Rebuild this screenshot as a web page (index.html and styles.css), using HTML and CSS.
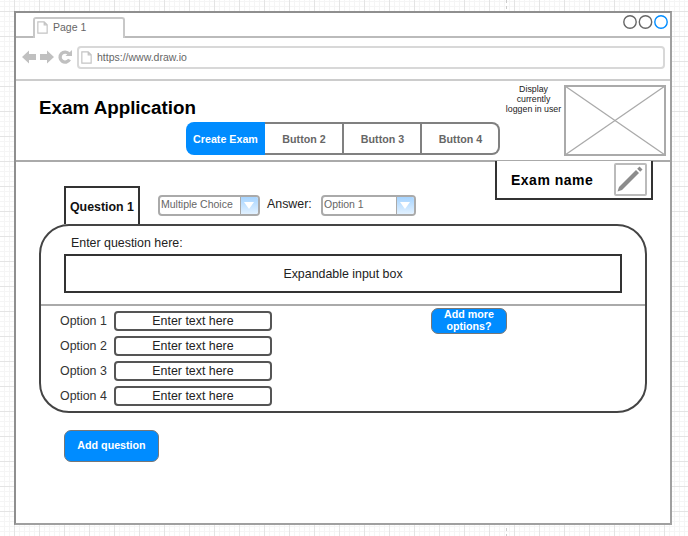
FILE: index.html
```html
<!DOCTYPE html>
<html lang="en">

<head>
  <meta charset="UTF-8" />
  <title>Exam Application</title>
  <link rel="stylesheet" href="styles.css">
</head>

<body>
  <div class="window">
    <div class="tabbar">
      <div class="tab">
        <svg class="doc-icon" width="11" height="13" viewBox="0 0 13 15">
          <path d="M1 .8H8.5L12 4.3V14.2H1Z M8.5 .8V4.3H12" fill="#fff" stroke="#c4c4c4" stroke-width="1.4" />
        </svg>
        <span>Page 1</span>
      </div>
      <svg class="circles" width="46" height="16" viewBox="0 0 46 16">
        <circle cx="7" cy="8" r="6.200" fill="none" stroke="#666" stroke-width="1.400" />
        <circle cx="22.500" cy="8" r="6.200" fill="none" stroke="#666" stroke-width="1.400" />
        <circle cx="38" cy="8" r="6.200" fill="none" stroke="#008cff" stroke-width="1.400" />
      </svg>
    </div>

    <div class="addressbar">
      <svg class="nav-icons" width="50" height="16" viewBox="0 0 50 16">
        <path d="M0 8 7 1.500V5H14V11H7V14.500Z" fill="#c0c0c0" />
        <path d="M32 8 25 1.500V5H18V11H25V14.500Z" fill="#c0c0c0" />
        <path d="M47.500 10.500A5 5 0 1 1 47 5" fill="none" stroke="#c0c0c0" stroke-width="3.400" />
        <path d="M43.500 7H50V1Z" fill="#c0c0c0" />
      </svg>
      <div class="urlbox">
        <svg class="doc-icon" width="11" height="13" viewBox="0 0 13 15">
          <path d="M1 .8H8.5L12 4.3V14.2H1Z M8.5 .8V4.3H12" fill="#fff" stroke="#c4c4c4" stroke-width="1.4" />
        </svg>
        <span>https://www.draw.io</span>
      </div>
    </div>

    <div class="header">
      <div class="header-left">
        <h1>Exam Application</h1>
        <div class="btn-group">
          <div class="seg active">Create Exam</div>
          <div class="seg">Button 2</div>
          <div class="seg">Button 3</div>
          <div class="seg">Button 4</div>
        </div>
      </div>
      <div class="user-note">Display<br>currently<br>loggen in user</div>
      <svg class="avatar" width="102" height="71" viewBox="0 0 102 71">
        <rect x="1" y="1" width="100" height="69" fill="#fff" stroke="#aaa" stroke-width="2" />
        <path d="M1 1 101 70M101 1 1 70" stroke="#aaa" stroke-width="1.300" />
      </svg>
    </div>

    <div class="content">
      <div class="exam-row">
        <div class="exam-name">
          <span>Exam name</span>
          <div class="edit-btn">
            <svg width="29" height="29" viewBox="0 0 29 29">
              <path d="M1.500 26.500 3 22 20 5 23 8 6 25Z" fill="#8c8c8c" />
              <path d="M21.200 3.800 23.500 1.500 26.500 4.500 24.200 6.800Z" fill="#8c8c8c" />
            </svg>
          </div>
        </div>
      </div>

      <div class="toolbar">
        <div class="question-tab">Question 1</div>
        <div class="select select-type">
          <span>Multiple Choice</span>
          <i class="arrow"></i>
        </div>
        <label class="answer-label">Answer:</label>
        <div class="select select-answer">
          <span>Option 1</span>
          <i class="arrow"></i>
        </div>
      </div>

      <div class="panel">
        <div class="prompt">Enter question here:</div>
        <div class="question-input">Expandable input box</div>
        <div class="options">
          <div class="option-list">
            <div class="option"><label>Option 1</label><div class="option-input">Enter text here</div></div>
            <div class="option"><label>Option 2</label><div class="option-input">Enter text here</div></div>
            <div class="option"><label>Option 3</label><div class="option-input">Enter text here</div></div>
            <div class="option"><label>Option 4</label><div class="option-input">Enter text here</div></div>
          </div>
          <div class="btn btn-more">Add more options?</div>
        </div>
      </div>

      <div class="btn btn-add">Add question</div>
    </div>
  </div>
</body>

</html>
```

FILE: styles.css
```css
* {
  box-sizing: border-box;
}

html,
body {
  height: 100%;
}

body {
  margin: 0;
  padding: 11px 0 0 14px;
  overflow: hidden;
  font-family: "Liberation Sans", Arial, sans-serif;
  color: #222;
  background-color: #fff;
  background-image:
    repeating-linear-gradient(to bottom, #ccc 0, #ccc 3px, transparent 3px, transparent 6px),
    linear-gradient(to right, #e4e4e4 1px, transparent 1px),
    linear-gradient(to bottom, #e4e4e4 1px, transparent 1px),
    linear-gradient(to right, #f5f5f5 1px, transparent 1px),
    linear-gradient(to bottom, #f5f5f5 1px, transparent 1px);
  background-size: 1px 100%, 25px 25px, 25px 25px, 5px 5px, 5px 5px;
  background-position: 506px 0, 14px 11px, 14px 11px, 14px 11px, 14px 11px;
  background-repeat: no-repeat, repeat, repeat, repeat, repeat;
}

.window {
  width: 658px;
  height: 514px;
  background: #fff;
  border: 2px solid #8f8f8f;
  border-right-color: #a0a0a0;
  border-bottom-color: #a0a0a0;
}

/* browser chrome */
.tabbar {
  display: flex;
  justify-content: space-between;
  height: 25px;
  padding: 4px 1px 0 17px;
  border-bottom: 2px solid #bbb;
}

.tab {
  display: flex;
  align-items: center;
  gap: 5px;
  width: 92px;
  height: 21px;
  padding: 0 0 3px 2px;
  margin-bottom: -2px;
  font-size: 10.500px;
  color: #666;
  background: #fff;
  border: 2px solid #c8c8c8;
  border-bottom: 0;
  border-radius: 3px 3px 0 0;
}

.circles {
  display: block;
  margin-top: -3px;
}

.addressbar {
  display: flex;
  align-items: center;
  gap: 5px;
  height: 43px;
  padding: 0 5px 3px 6px;
  border-bottom: 2px solid #ccc;
}

.urlbox {
  flex: 1;
  display: flex;
  align-items: center;
  gap: 5px;
  height: 23px;
  padding-left: 2px;
  font-size: 10.500px;
  color: #666;
  border: 2px solid #d8d8d8;
  border-radius: 4px;
}

/* app header */
.header {
  display: flex;
  height: 81px;
  padding-top: 4px;
  border-bottom: 2px solid #aaa;
}

.header-left {
  width: 485px;
}

h1 {
  margin: 0;
  padding: 11px 0 0 23px;
  height: 37px;
  font-size: 18.800px;
  line-height: 24px;
  font-weight: bold;
  color: #000;
}

.btn-group {
  display: flex;
  width: 314px;
  height: 33px;
  margin-left: 170px;
}

.seg {
  flex: 0 0 78px;
  display: flex;
  align-items: center;
  justify-content: center;
  padding-left: 1px;
  font-size: 10.700px;
  font-weight: bold;
  color: #666;
  border: 2px solid #808080;
  border-left: 0;
}

.seg.active {
  flex: 0 0 79px;
  padding-left: 0;
  color: #fff;
  background: #008cff;
  border: 0;
  border-radius: 8px 0 0 8px;
}

.seg.active + .seg {
  flex-basis: 79px;
}

.seg:last-child {
  border-radius: 0 8px 8px 0;
}

.user-note {
  width: 63px;
  margin-top: -1px;
  padding-left: 2px;
  font-size: 8.800px;
  line-height: 10px;
  text-align: center;
}

.avatar {
  display: block;
  flex: none;
}

/* question area */
.content {
  margin-top: -1px;
  padding-left: 23px;
}

.exam-row {
  display: flex;
  justify-content: flex-end;
  padding-right: 17px;
  margin-bottom: -14px;
}

.exam-name {
  display: flex;
  align-items: center;
  justify-content: space-between;
  width: 158px;
  height: 39px;
  padding: 0 4px 0 14px;
  font-size: 14px;
  font-weight: bold;
  letter-spacing: .5px;
  color: #000;
  background: #fff;
  border: 2px solid #333;
  border-top: 0;
}

.edit-btn {
  display: flex;
  width: 33px;
  height: 33px;
  border: 2px solid #bbb;
  border-radius: 2px;
}

.toolbar {
  display: flex;
  align-items: flex-start;
  height: 38px;
  padding-left: 25px;
}

.question-tab {
  flex: none;
  width: 76px;
  height: 38px;
  padding-top: 12px;
  text-align: center;
  font-size: 12.400px;
  font-weight: bold;
  color: #111;
  border: 2px solid #333;
  border-bottom: 0;
}

.select {
  display: flex;
  justify-content: space-between;
  height: 21px;
  margin-top: 9px;
  padding-left: 1px;
  font-size: 10.500px;
  line-height: 15px;
  color: #666;
  border: 2px solid #aaa;
  border-radius: 4px;
  overflow: hidden;
}

.select-type {
  width: 102px;
  margin-left: 18px;
}

.select-answer {
  width: 95px;
}

.arrow {
  position: relative;
  flex: none;
  width: 18px;
  background: linear-gradient(#a6d4ff, #e2f1ff);
  border-left: 1px solid #aaa;
}

.arrow::after {
  content: "";
  position: absolute;
  left: 3px;
  top: 5px;
  border: 5px solid transparent;
  border-top: 7px solid #fff;
  border-bottom: 0;
}

.answer-label {
  width: 61px;
  padding: 11px 0 0 7px;
  font-size: 12.400px;
}

.panel {
  width: 608px;
  height: 189px;
  padding-top: 10px;
  background: #fff;
  border: 2px solid #444;
  border-radius: 30px;
}

.prompt {
  padding-left: 30px;
  font-size: 12.400px;
  line-height: 15px;
}

.question-input {
  display: flex;
  align-items: center;
  justify-content: center;
  width: 558px;
  height: 39px;
  margin: 3px 0 11px 23px;
  font-size: 12.400px;
  border: 2px solid #333;
}

.options {
  display: flex;
  padding: 5px 0 0 19px;
  border-top: 2px solid #aaa;
}

.option-list {
  display: flex;
  flex-direction: column;
  gap: 5px;
}

.option {
  display: flex;
  align-items: center;
  font-size: 12.400px;
}

.option label {
  width: 54px;
  color: #333;
}

.option-input {
  width: 158px;
  height: 20px;
  line-height: 16px;
  text-align: center;
  border: 2px solid #555;
  border-radius: 4px;
}

/* blue buttons */
.btn {
  display: flex;
  align-items: center;
  justify-content: center;
  padding-bottom: 2px;
  text-align: center;
  font-size: 10.700px;
  font-weight: bold;
  color: #fff;
  background: #008cff;
  border: 1px solid #777;
  border-radius: 7px;
}

.btn-more {
  width: 76px;
  height: 26px;
  margin: -3px 0 0 159px;
  line-height: 12px;
}

.btn-add {
  width: 95px;
  height: 32px;
  margin: 17px 0 0 25px;
}
```
